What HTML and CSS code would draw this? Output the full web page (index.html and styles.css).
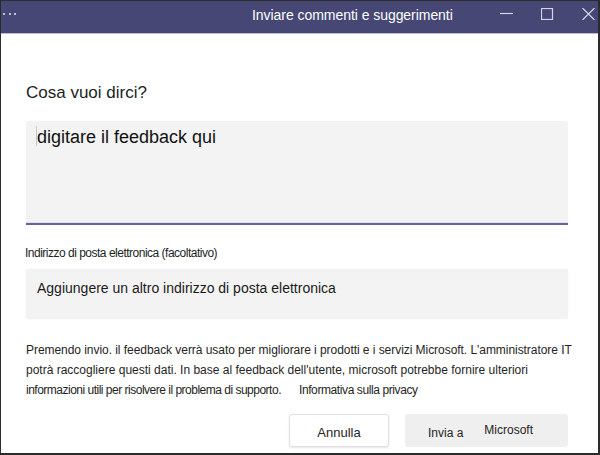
FILE: index.html
```html
<!DOCTYPE html>
<html lang="it">
<head>
<meta charset="utf-8">
<title>Inviare commenti e suggerimenti</title>
<link rel="stylesheet" href="styles.css">
</head>
<body>
<div class="window">
  <header class="titlebar">
    <div class="dots"><span></span><span></span><span></span></div>
    <div class="title">Inviare commenti e suggerimenti</div>
    <div class="controls">
      <svg class="ctl" width="13" height="12" viewBox="0 0 13 12"><path d="M0 5.5H13" stroke="#d4d4e6" stroke-width="1.2" fill="none"/></svg>
      <svg class="ctl" width="13" height="12" viewBox="0 0 13 12"><rect x="0.5" y="0.5" width="11" height="11" stroke="#d4d4e6" stroke-width="1.2" fill="none"/></svg>
      <svg class="ctl" width="13" height="12" viewBox="0 0 13 12"><path d="M0.5 0L12.5 12M12.5 0L0.5 12" stroke="#d4d4e6" stroke-width="1.2" fill="none"/></svg>
    </div>
  </header>
  <main class="content">
    <h1 class="heading">Cosa vuoi dirci?</h1>
    <div class="textarea"><span class="caret"></span>digitare il feedback qui</div>
    <div class="label">Indirizzo di posta elettronica (facoltativo)</div>
    <div class="email">Aggiungere un altro indirizzo di posta elettronica</div>
    <p class="notice">
      <span class="line l1">Premendo invio. il feedback verrà usato per migliorare i prodotti e i servizi Microsoft. L'amministratore IT</span>
      <span class="line l2">potrà raccogliere questi dati. In base al feedback dell'utente, microsoft potrebbe fornire ulteriori</span>
      <span class="line l3">informazioni utili per risolvere il problema di supporto.<span class="privacy">Informativa sulla privacy</span></span>
    </p>
    <div class="actions">
      <button class="btn cancel">Annulla</button>
      <button class="btn send"><span>Invia a</span><span class="ms">Microsoft</span></button>
    </div>
  </main>
</div>
</body>
</html>
```

FILE: styles.css
```css
* { box-sizing: border-box; }
html, body { margin: 0; padding: 0; background: #fff; }
body { font-family: "Liberation Sans", Arial, sans-serif; color: #252423; }

.window {
  width: 600px;
  height: 455px;
  border-top: 1px solid #2b2b2b;
  border-left: 1px solid #2b2b2b;
  border-right: 2px solid #2b2b2b;
  border-bottom: 2px solid #2b2b2b;
  display: flex;
  flex-direction: column;
  background: #fff;
}

.titlebar {
  height: 33px;
  background: #464775;
  border-bottom: 1px solid #b9badd;
  display: flex;
  align-items: flex-start;
  padding: 6px 3px 0 2px;
  flex: none;
}
.dots {
  height: 12px;
  display: flex;
  align-items: center;
  gap: 3.5px;
  padding-top: 1px;
}
.dots span {
  width: 2px;
  height: 2px;
  background: #e8e8f4;
  border-radius: 50%;
}
.title {
  margin-left: 236px;
  color: #ffffff;
  font-size: 14px;
  line-height: 16px;
  white-space: nowrap;
  letter-spacing: -0.05px;
}
.controls {
  margin-left: auto;
  display: flex;
  gap: 28px;
  padding-top: 1px;
}
.ctl { display: block; }

.content {
  flex: 1;
  padding: 49px 30px 0 25px;
}
.heading {
  margin: 0 0 18px;
  font-size: 17px;
  line-height: 20px;
  font-weight: normal;
  color: #201f1e;
}
.textarea {
  height: 104px;
  background: #f3f3f3;
  border-radius: 3px 3px 0 0;
  border-bottom: 2px solid #6264a7;
  box-shadow: inset 0 -1px 0 #e2e2e2;
  padding: 5px 11px 0;
  font-size: 18px;
  line-height: 22px;
  color: #111;
}
.caret {
  display: inline-block;
  width: 1px;
  height: 20px;
  background: #c8c8c8;
  vertical-align: top;
  margin: 0 0 0 -1px;
}
.label {
  margin: 20px 0 8px -1px;
  font-size: 12px;
  line-height: 16px;
  letter-spacing: -0.5px;
  color: #201f1e;
}
.email {
  height: 50px;
  background: #f3f3f3;
  border-radius: 3px;
  box-shadow: 0 0 1px rgba(0,0,0,0.12);
  padding: 10px 11px 0;
  font-size: 14px;
  line-height: 18px;
  color: #1b1a19;
}
.notice {
  margin: 21px 0 0;
  font-size: 12px;
  line-height: 20px;
  color: #252423;
  white-space: nowrap;
}
.line { display: block; }
.l1 { letter-spacing: -0.05px; }
.l2 { letter-spacing: 0; }
.l3 { letter-spacing: -0.5px; }
.privacy { margin-left: 18px; letter-spacing: -0.4px; }

.actions {
  margin-top: 14px;
  display: flex;
  justify-content: flex-end;
  gap: 16px;
}
.btn {
  height: 33px;
  font-family: "Liberation Sans", Arial, sans-serif;
  color: #252423;
  border-radius: 3px;
  display: flex;
  align-items: center;
  padding: 3px 0 0;
}
.cancel {
  width: 100px;
  justify-content: center;
  background: #fff;
  border: 1px solid #e0e0e0;
  box-shadow: 0 1px 2px rgba(0,0,0,0.1);
  font-size: 13px;
}
.send {
  width: 163px;
  background: #efefef;
  border: none;
  font-size: 12px;
  padding-left: 23px;
  gap: 21px;
  padding-top: 4px;
}
.send .ms { padding-bottom: 5px; }
```
